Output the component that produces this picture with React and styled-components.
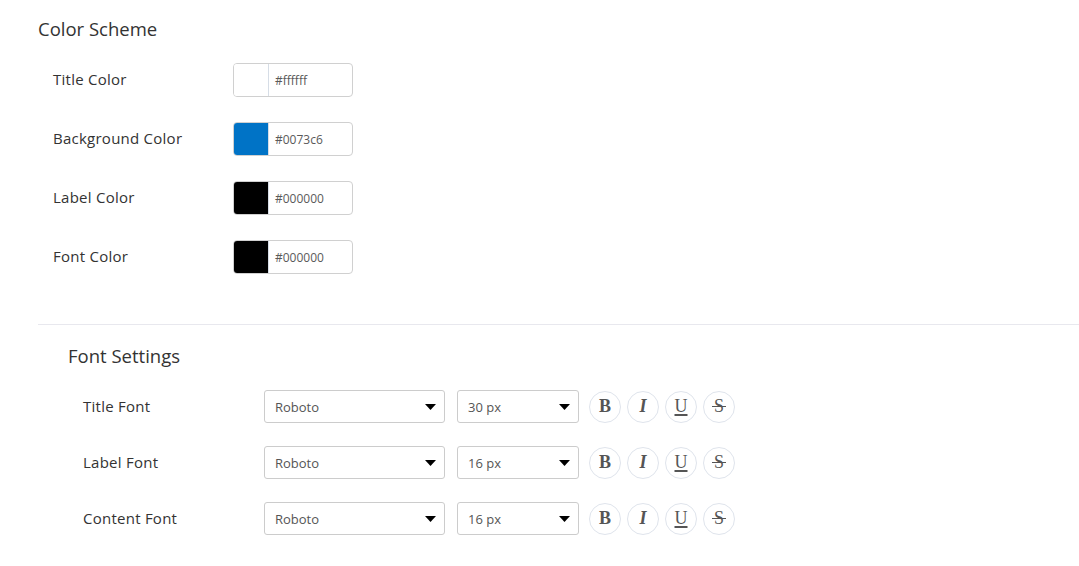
import React from 'react'
import styled, { createGlobalStyle } from 'styled-components'

const GlobalStyle = createGlobalStyle`
  body {
    margin: 0;
    background: #ffffff;
    font-family: 'Open Sans', 'Noto Sans', sans-serif;
    color: #333333;
  }
`

const colorRows = [
  { label: 'Title Color', value: '#ffffff' },
  { label: 'Background Color', value: '#0073c6' },
  { label: 'Label Color', value: '#000000' },
  { label: 'Font Color', value: '#000000' },
]

const fontRows = [
  { label: 'Title Font', family: 'Roboto', size: '30 px' },
  { label: 'Label Font', family: 'Roboto', size: '16 px' },
  { label: 'Content Font', family: 'Roboto', size: '16 px' },
]

function Caret() {
  return (
    <svg width='11' height='6' viewBox='0 0 11 6'>
      <path d='M0 0 L11 0 L5.5 6 Z' fill='#000' />
    </svg>
  )
}

function App() {
  return (
    <Page>
      <GlobalStyle />
      <ColorSection>
        <Heading>Color Scheme</Heading>
        <ColorList>
          {colorRows.map((row) => (
            <Row key={row.label}>
              <Label width={180}>{row.label}</Label>
              <ColorInput>
                <Swatch color={row.value} />
                <HexText>{row.value}</HexText>
              </ColorInput>
            </Row>
          ))}
        </ColorList>
      </ColorSection>
      <Divider />
      <FontSection>
        <Heading>Font Settings</Heading>
        <FontList>
          {fontRows.map((row) => (
            <Row key={row.label}>
              <Label width={181}>{row.label}</Label>
              <Select width={181}>
                <span>{row.family}</span>
                <Caret />
              </Select>
              <Select width={122}>
                <span>{row.size}</span>
                <Caret />
              </Select>
              <StyleButtons>
                <RoundButton bold>B</RoundButton>
                <RoundButton bold italic>I</RoundButton>
                <RoundButton underline>U</RoundButton>
                <RoundButton strike>S</RoundButton>
              </StyleButtons>
            </Row>
          ))}
        </FontList>
      </FontSection>
    </Page>
  )
}

const Page = styled.div`
  padding: 16px 0 40px 38px;
`

const ColorSection = styled.div`
  display: flex;
  flex-direction: column;
`

const FontSection = styled.div`
  display: flex;
  flex-direction: column;
  padding-left: 30px;
  padding-top: 18px;
`

const Heading = styled.h2`
  margin: 0;
  font-size: 18.5px;
  font-weight: 400;
  line-height: 25px;
  color: #333333;
`

const ColorList = styled.div`
  display: flex;
  flex-direction: column;
  gap: 25px;
  padding: 22px 0 0 15px;
`

const FontList = styled.div`
  display: flex;
  flex-direction: column;
  gap: 23px;
  padding: 22px 0 0 15px;
`

const Row = styled.div`
  display: flex;
  align-items: center;
`

const Label = styled.div`
  width: ${(p) => p.width}px;
  flex-shrink: 0;
  font-size: 15px;
  letter-spacing: 0.25px;
  line-height: 20px;
  margin-top: -2px;
  color: #333333;
`

const ColorInput = styled.div`
  display: flex;
  width: 120px;
  height: 34px;
  box-sizing: border-box;
  border: 1px solid #d0d0d0;
  border-radius: 4px;
  overflow: hidden;
`

const Swatch = styled.div`
  width: 35px;
  flex-shrink: 0;
  background: ${(p) => p.color};
  border-right: 1px solid #d6dde6;
  margin: -1px 0 -1px -1px;
`

const HexText = styled.div`
  display: flex;
  align-items: center;
  padding-left: 6px;
  font-size: 12px;
  color: #5a5a5a;
`

const Select = styled.div`
  display: flex;
  align-items: center;
  justify-content: space-between;
  width: ${(p) => p.width}px;
  height: 33px;
  box-sizing: border-box;
  padding: 0 8px 0 10px;
  margin-right: 12px;
  border: 1px solid #cccccc;
  border-radius: 3px;
  font-size: 13px;
  color: #555555;
`

const StyleButtons = styled.div`
  display: flex;
  gap: 6px;
  margin-left: -2px;
`

const RoundButton = styled.div`
  position: relative;
  width: 32px;
  height: 32px;
  box-sizing: border-box;
  border: 1px solid #dfe4ec;
  border-radius: 50%;
  display: flex;
  align-items: center;
  justify-content: center;
  font-family: 'Liberation Serif', 'DejaVu Serif', serif;
  font-weight: ${(p) => (p.bold ? 700 : 400)};
  font-size: 18px;
  color: #555555;
  font-style: ${(p) => (p.italic ? 'italic' : 'normal')};
  text-decoration: ${(p) => (p.underline ? 'underline' : 'none')};
  text-decoration-thickness: 1.5px;
  text-underline-offset: 2px;

  &::after {
    content: '';
    display: ${(p) => (p.strike ? 'block' : 'none')};
    position: absolute;
    left: 8px;
    right: 8px;
    top: 14px;
    height: 1.5px;
    background: #555555;
  }
`

const Divider = styled.hr`
  margin: 50px 0 0 0;
  border: none;
  border-top: 1px solid #e8e8ee;
  height: 0;
`

export default App
